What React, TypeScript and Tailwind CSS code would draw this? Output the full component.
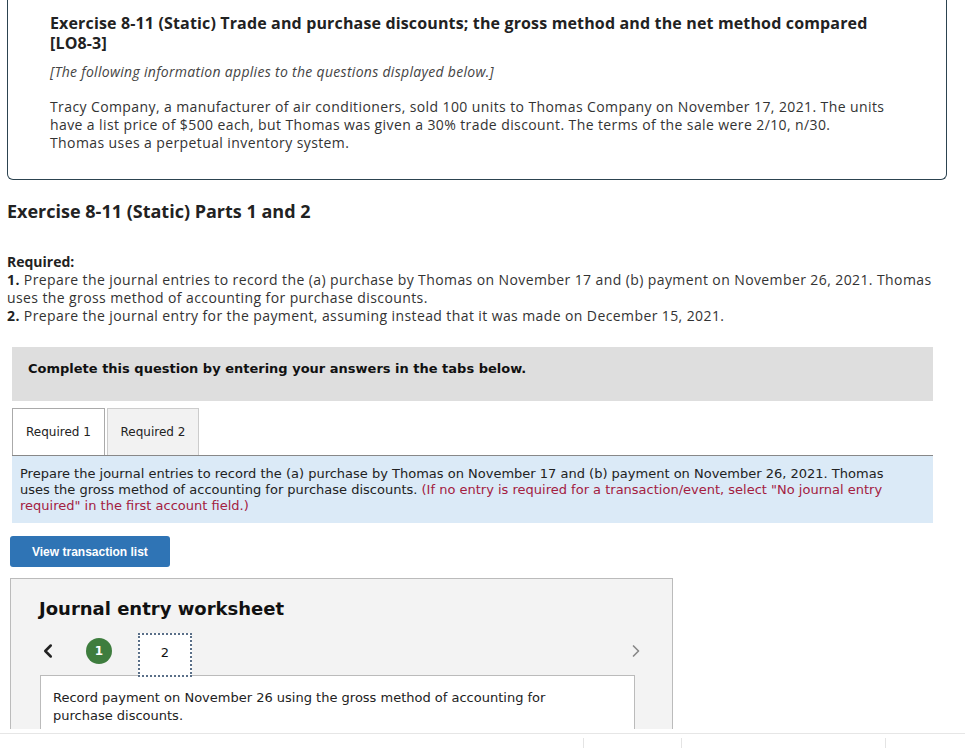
import { ChevronLeft, ChevronRight } from 'lucide-react'

const proxima = { fontFamily: '"Open Sans", Lato, sans-serif' }
const verdana = { fontFamily: '"DejaVu Sans", Verdana, sans-serif' }

/** Shared intro box — its top edge is scrolled above the window. */
function IntroBox() {
  return (
    <div className="ml-[7px] w-[940px] rounded-b-[6px] border border-t-0 border-[#2c4350] pb-[27px] pl-[42px] pt-[13px] text-[#222]">
      <h2 className="whitespace-nowrap text-[16px] font-bold leading-[20px] tracking-[0.15px]">
        Exercise 8-11 (Static) Trade and purchase discounts; the gross method and the net method compared
        <br />
        [LO8-3]
      </h2>
      <p className="mt-[10px] text-[14px] italic leading-[18px] tracking-[0.3px] text-[#444]">
        [The following information applies to the questions displayed below.]
      </p>
      <p className="mt-[17px] whitespace-nowrap text-[14px] leading-[18px] tracking-[0.4px] text-[#333]">
        Tracy Company, a manufacturer of air conditioners, sold 100 units to Thomas Company on November 17, 2021. The units
        <br />
        have a list price of $500 each, but Thomas was given a 30% trade discount. The terms of the sale were 2/10, n/30.
        <br />
        Thomas uses a perpetual inventory system.
      </p>
    </div>
  )
}

function Tabs() {
  return (
    <div className="ml-[12px] mt-[7px] w-[921px]" style={verdana}>
      <div className="flex gap-[2px] border-b border-[#888]">
        <div className="flex h-[47px] w-[93px] items-center justify-center border border-b-0 border-[#aaa] bg-white text-[12px] text-[#222]">
          Required 1
        </div>
        <div className="flex h-[47px] w-[92px] items-center justify-center border border-b-0 border-[#ccc] bg-[#f2f2f2] text-[12px] text-[#222]">
          Required 2
        </div>
      </div>
      <div className="h-[67px] whitespace-nowrap bg-[#dbeaf7] px-[8px] pt-[10px] text-[13px] leading-[16px] text-[#222]">
        Prepare the journal entries to record the (a) purchase by Thomas on November 17 and (b) payment on November 26, 2021. Thomas
        <br />
        uses the gross method of accounting for purchase discounts.{' '}
        <span className="text-[#a3203f]">
          (If no entry is required for a transaction/event, select "No journal entry
          <br />
          required" in the first account field.)
        </span>
      </div>
    </div>
  )
}

function Worksheet() {
  return (
    <div className="ml-[10px] mt-[11px] h-[200px] w-[663px] border border-[#bbb] bg-[#f3f3f3] pt-[18px]" style={verdana}>
      <h3 className="pl-[28px] text-[18px] font-bold leading-[24px] text-[#111]">Journal entry worksheet</h3>
      <div className="ml-[29px] mt-[12px] flex h-[44px] w-[606px] items-center">
        <ChevronLeft size={22} strokeWidth={2.75} className="mb-[9px] ml-[-3px] shrink-0 text-[#222]" />
        <div className="mb-[8px] ml-[27px] flex h-[26px] w-[26px] shrink-0 items-center justify-center rounded-full bg-[#3e7d3e] text-[12px] font-bold text-white">
          1
        </div>
        <div className="ml-[26px] flex h-[44px] w-[54px] shrink-0 items-center justify-center border-2 border-dotted border-[#5a6f88] bg-white pb-[4px] text-[13px] text-[#111]">
          2
        </div>
        <ChevronRight size={20} strokeWidth={2} className="mb-[9px] ml-auto shrink-0 text-[#888]" />
      </div>
      <div className="ml-[29px] mt-[-2px] h-[80px] w-[595px] border border-[#bbb] bg-white px-[12px] pt-[13px] text-[13px] leading-[18px] text-[#222]">
        Record payment on November 26 using the gross method of accounting for
        <br />
        purchase discounts.
      </div>
    </div>
  )
}

export default function App() {
  return (
    <div className="flex h-[748px] w-[965px] flex-col overflow-hidden bg-white">
      <div className="h-[729px] overflow-hidden" style={proxima}>
        <IntroBox />

        <h1 className="ml-[7px] mt-[20px] text-[18px] font-bold leading-[22px] text-[#222]">
          Exercise 8-11 (Static) Parts 1 and 2
        </h1>

        <div className="ml-[7px] mt-[31px] whitespace-nowrap text-[14px] leading-[18px] tracking-[0.4px] text-[#333]">
          <p className="font-bold tracking-normal text-[#222]">Required:</p>
          <p>
            <b className="text-[#222]">1.</b> Prepare the journal entries to record the (a) purchase by Thomas on November 17 and (b) payment on November 26, 2021. Thomas
            <br />
            uses the gross method of accounting for purchase discounts.
          </p>
          <p>
            <b className="text-[#222]">2.</b> Prepare the journal entry for the payment, assuming instead that it was made on December 15, 2021.
          </p>
        </div>

        <div
          className="ml-[12px] mt-[22px] h-[54px] w-[921px] bg-[#dedede] pl-[16px] pt-[13px] text-[13px] font-bold leading-[18px] text-[#111]"
          style={verdana}
        >
          Complete this question by entering your answers in the tabs below.
        </div>

        <Tabs />

        <button
          type="button"
          className="ml-[10px] mt-[13px] h-[31px] w-[160px] rounded-[3px] bg-[#2f74b5] pl-[22px] text-left text-[12px] font-bold text-white"
          style={{ fontFamily: '"Liberation Sans", Arial, sans-serif' }}
        >
          View transaction list
        </button>

        <Worksheet />
      </div>

      {/* bottom toolbar strip */}
      <div className="mt-[4px] flex h-[15px] border-t border-[#e6e6e6] pt-[4px]">
        <div className="ml-[583px] h-full border-l border-[#e4e4e4]" />
        <div className="ml-[97px] h-full border-l border-[#e4e4e4]" />
        <div className="ml-[203px] h-full border-l border-[#e4e4e4]" />
      </div>
    </div>
  )
}
